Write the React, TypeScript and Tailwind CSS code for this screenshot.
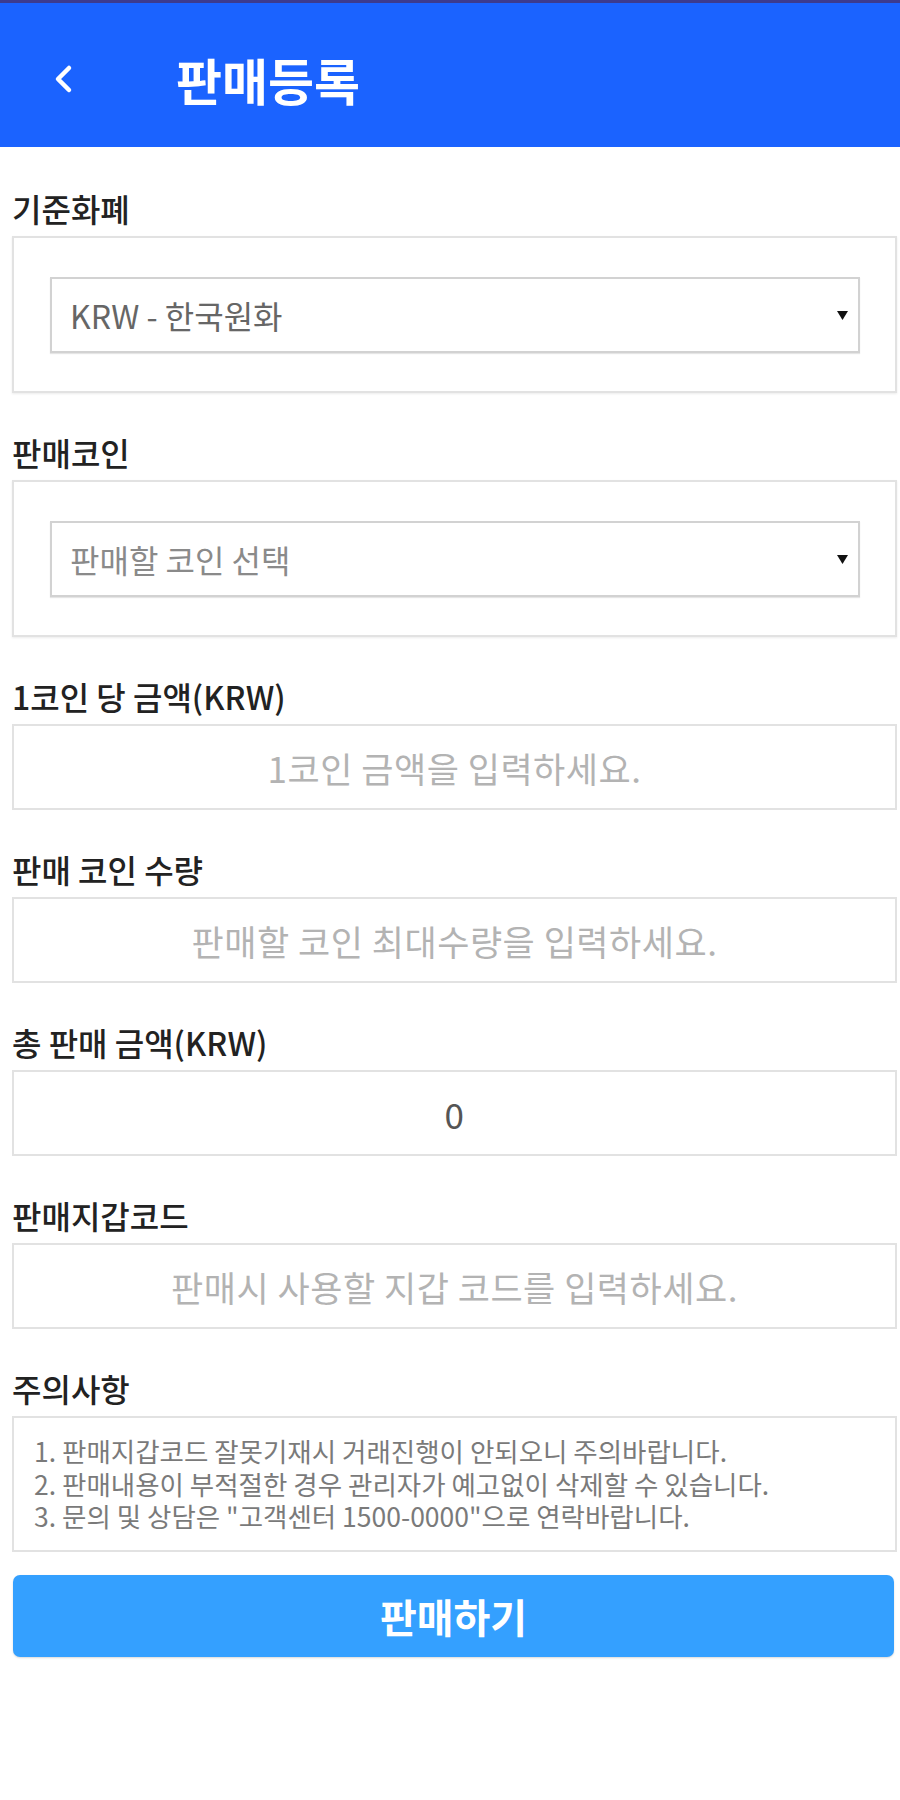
import React from 'react';

const labelCls = "h-[40px] flex items-center text-[32px] font-medium text-[#222] leading-none";

function Field({ label, children, first }: { label: string; children: React.ReactNode; first?: boolean }) {
  return (
    <div className={first ? "mt-[41px]" : "mt-[39px]"}>
      <div className={labelCls}>{label}</div>
      <div className="mt-[8px]">{children}</div>
    </div>
  );
}

function SelectBox({ value, muted }: { value: string; muted?: boolean }) {
  return (
    <div className="h-[157px] border-2 border-[#e2e2e2] bg-white shadow-[0_1px_2px_rgba(0,0,0,0.08)] flex items-center pl-[36px] pr-[35px]">
      <div className="flex-1 h-[76px] border-2 border-[#d2d2d2] flex items-center justify-between pl-[18px] pr-[10px] shadow-[0_1px_1px_rgba(0,0,0,0.1)]">
        <span className={`text-[32px] ${muted ? 'text-[#8a8a8a]' : 'text-[#666]'}`}>{value}</span>
        <svg width="11" height="10" viewBox="0 0 11 10">
          <polygon points="0,1 11,1 5.5,10" fill="#111" />
        </svg>
      </div>
    </div>
  );
}

function TextBox({ placeholder, value }: { placeholder?: string; value?: string }) {
  return (
    <input
      readOnly
      value={value ?? ''}
      placeholder={placeholder}
      className="w-full h-[86px] border-2 border-[#e2e2e2] bg-white text-center text-[35px] tracking-[0.5px] text-[#555] placeholder:text-[#b3b3b3] outline-none"
    />
  );
}

export default function App() {
  return (
    <div className="w-[900px] min-h-[1800px] bg-white font-['Noto_Sans_CJK_KR','Noto_Sans',sans-serif]">
      <div className="h-[3px] bg-[#3d3b8e]" />
      <header className="h-[144px] bg-[#1b63ff] flex items-center pt-[8px]">
        <button className="ml-[52px] w-[22px] h-[30px] flex items-center justify-center">
          <svg width="22" height="30" viewBox="0 0 22 30" fill="none">
            <polyline points="17,4 6,15 17,26" stroke="#fff" strokeWidth="4.5" strokeLinecap="round" strokeLinejoin="round" />
          </svg>
        </button>
        <h1 className="ml-[102px] text-[50px] font-bold text-white leading-none">판매등록</h1>
      </header>

      <main className="pl-[12px] pr-[3px]">
        <Field label="기준화폐" first>
          <SelectBox value="KRW - 한국원화" />
        </Field>
        <Field label="판매코인">
          <SelectBox value="판매할 코인 선택" muted />
        </Field>
        <Field label="1코인 당 금액(KRW)">
          <TextBox placeholder="1코인 금액을 입력하세요." />
        </Field>
        <Field label="판매 코인 수량">
          <TextBox placeholder="판매할 코인 최대수량을 입력하세요." />
        </Field>
        <Field label="총 판매 금액(KRW)">
          <TextBox value="0" />
        </Field>
        <Field label="판매지갑코드">
          <TextBox placeholder="판매시 사용할 지갑 코드를 입력하세요." />
        </Field>
        <Field label="주의사항">
          <div className="h-[136px] border-2 border-[#e2e2e2] pl-[20px] pt-[17px] text-[26.5px] leading-[32.5px] text-[#7a7a7a] whitespace-nowrap">
            <p>1. 판매지갑코드 잘못기재시 거래진행이 안되오니 주의바랍니다.</p>
            <p>2. 판매내용이 부적절한 경우 관리자가 예고없이 삭제할 수 있습니다.</p>
            <p>3. 문의 및 상담은 "고객센터 1500-0000"으로 연락바랍니다.</p>
          </div>
        </Field>
        <button className="mt-[23px] ml-[1px] w-[881px] h-[82px] rounded-[7px] bg-[#34a0ff] text-white text-[40px] font-bold shadow-[0_1px_2px_rgba(0,0,0,0.15)]">
          판매하기
        </button>
      </main>
    </div>
  );
}
